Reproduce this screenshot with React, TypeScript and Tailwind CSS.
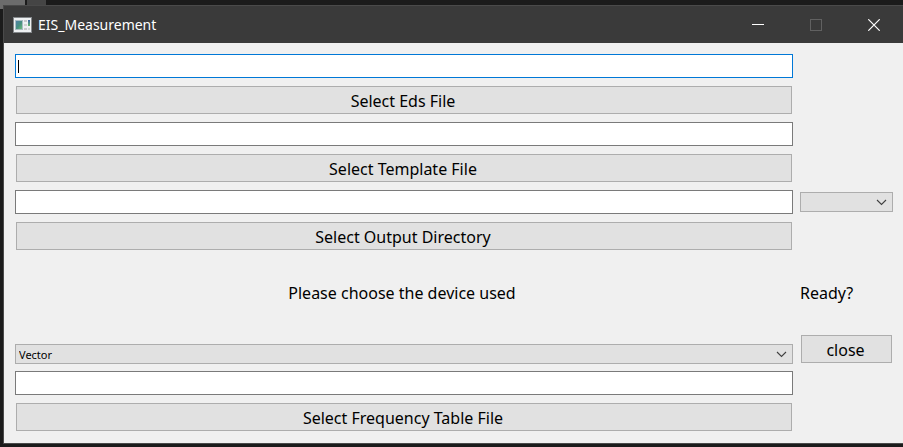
import type { ComponentProps, ReactNode } from "react";

function TextField({ className = "", ...props }: ComponentProps<"input">) {
  return (
    <input
      type="text"
      className={`block h-6 w-full border bg-white px-1 text-xs text-black outline-none ${className || "border-[#7a7a7a]"}`}
      {...props}
    />
  );
}

function PushButton({ id, children }: { id?: string; children: ReactNode }) {
  return (
    <div className="p-px">
      <button
        id={id}
        type="button"
        className="flex h-7 w-full items-center justify-center border border-[#adadad] bg-[#e1e1e1] pt-0.5 pr-0.5 text-base leading-5 text-black"
      >
        {children}
      </button>
    </div>
  );
}

function ComboBox({ options, ...props }: ComponentProps<"select"> & { options: string[] }) {
  return (
    <div className="relative">
      <select
        className="block h-5 w-full appearance-none border border-[#adadad] bg-[#e1e1e1] pt-0.5 pr-6 pl-[3px] text-[11px] leading-4 text-black outline-none"
        {...props}
      >
        {options.map((option) => (
          <option key={option} value={option}>
            {option}
          </option>
        ))}
      </select>
      <svg
        className="pointer-events-none absolute top-[7px] right-[6px]"
        width="11"
        height="7"
        viewBox="0 0 11 7"
        fill="none"
        stroke="#404040"
        strokeWidth="1.1"
        aria-hidden="true"
      >
        <path d="M1 1 L5.5 5.5 L10 1" />
      </svg>
    </div>
  );
}

function AppIcon() {
  return (
    <svg width="19" height="16" viewBox="0 0 19 16" aria-hidden="true">
      <defs>
        <linearGradient id="screen" x1="0" y1="0" x2="1" y2="1">
          <stop offset="0" stopColor="#4d7fa6" />
          <stop offset="0.55" stopColor="#469080" />
          <stop offset="1" stopColor="#6fbd78" />
        </linearGradient>
        <linearGradient id="gauge" x1="0" y1="0" x2="0" y2="1">
          <stop offset="0" stopColor="#3a62a8" />
          <stop offset="1" stopColor="#63b76b" />
        </linearGradient>
      </defs>
      <rect x="0" y="0" width="19" height="16" fill="#84888b" />
      <rect x="1" y="1" width="17" height="14" fill="#eef0f2" />
      <rect x="2" y="3" width="8" height="10" fill="#a9bdc4" />
      <rect x="3" y="4" width="6" height="8" fill="url(#screen)" />
      <rect x="11" y="3" width="3" height="2" fill="#c7c9cb" />
      <rect x="11" y="7" width="3" height="2" fill="#d0d2d3" />
      <rect x="11" y="11" width="3" height="2" fill="#c7c9cb" />
      <rect x="15" y="3" width="2" height="6" fill="url(#gauge)" />
      <rect x="15" y="11" width="2" height="2" fill="#d3d5d6" />
    </svg>
  );
}

function TitleBar() {
  const control = "flex h-full w-[58px] items-center justify-center";
  return (
    <header className="flex h-[37px] items-center bg-[#3a3a3a] pl-[9px] text-white">
      <AppIcon />
      <h1 className="ml-[6px] flex-1 text-sm leading-5">EIS_Measurement</h1>
      <div className="flex h-full">
        <button type="button" aria-label="Minimize" className={control}>
          <svg width="12" height="12" viewBox="0 0 12 12" aria-hidden="true">
            <path d="M0 5.5 H12" stroke="#ffffff" />
          </svg>
        </button>
        <button type="button" aria-label="Maximize" disabled className={control}>
          <svg width="12" height="12" viewBox="0 0 12 12" fill="none" aria-hidden="true">
            <rect x="0.5" y="0.5" width="11" height="11" stroke="#616161" />
          </svg>
        </button>
        <button type="button" aria-label="Close" className={control}>
          <svg width="12" height="12" viewBox="0 0 12 12" aria-hidden="true">
            <path d="M0.3 0.3 L11.7 11.7 M11.7 0.3 L0.3 11.7" stroke="#ffffff" strokeWidth="1.2" />
          </svg>
        </button>
      </div>
    </header>
  );
}

export default function App() {
  return (
    <div className="relative min-h-screen bg-[#1b1b1b] pt-[5px] pb-[3px] pl-[3px] font-['Noto_Sans','Open_Sans',sans-serif]">
      <div className="absolute top-0 left-0 flex h-[9px]" aria-hidden="true">
        <div className="w-[25px] bg-[#6c6c6c]" />
        <div className="ml-[2px] w-[19px] bg-[#454545]" />
      </div>
      <main className="relative border-y border-l border-[#4a4a4a] bg-[#f0f0f0]">
        <TitleBar />
        <form
          className="grid grid-cols-[minmax(0,1fr)_93px] gap-[7px] py-[11px] pr-[10px] pl-[11px]"
          onSubmit={(event) => event.preventDefault()}
        >
          <div className="relative">
            <TextField aria-labelledby="eds" className="border-[#0078d7]" />
            <span className="absolute top-[6px] left-[3px] h-[13px] w-px bg-black" aria-hidden="true" />
          </div>
          <div className="col-start-1">
            <PushButton id="eds">Select Eds File</PushButton>
          </div>
          <div className="col-start-1">
            <TextField aria-labelledby="template" />
          </div>
          <div className="col-start-1">
            <PushButton id="template">Select Template File</PushButton>
          </div>
          <div className="col-start-1">
            <TextField aria-labelledby="output" />
          </div>
          <div className="self-center">
            <ComboBox options={[""]} aria-labelledby="ready" />
          </div>
          <div className="col-start-1">
            <PushButton id="output">Select Output Directory</PushButton>
          </div>
          <label
            htmlFor="device"
            className="col-start-1 pt-[25px] pr-1 pb-[23px] text-center text-base leading-[21px] text-black"
          >
            Please choose the device used
          </label>
          <p id="ready" className="pt-[25px] pb-[23px] text-base leading-[21px] text-black">
            Ready?
          </p>
          <div className="self-end">
            <ComboBox id="device" options={["Vector"]} />
          </div>
          <PushButton>close</PushButton>
          <div className="col-start-1">
            <TextField aria-labelledby="frequency" />
          </div>
          <div className="col-start-1">
            <PushButton id="frequency">Select Frequency Table File</PushButton>
          </div>
        </form>
      </main>
    </div>
  );
}
